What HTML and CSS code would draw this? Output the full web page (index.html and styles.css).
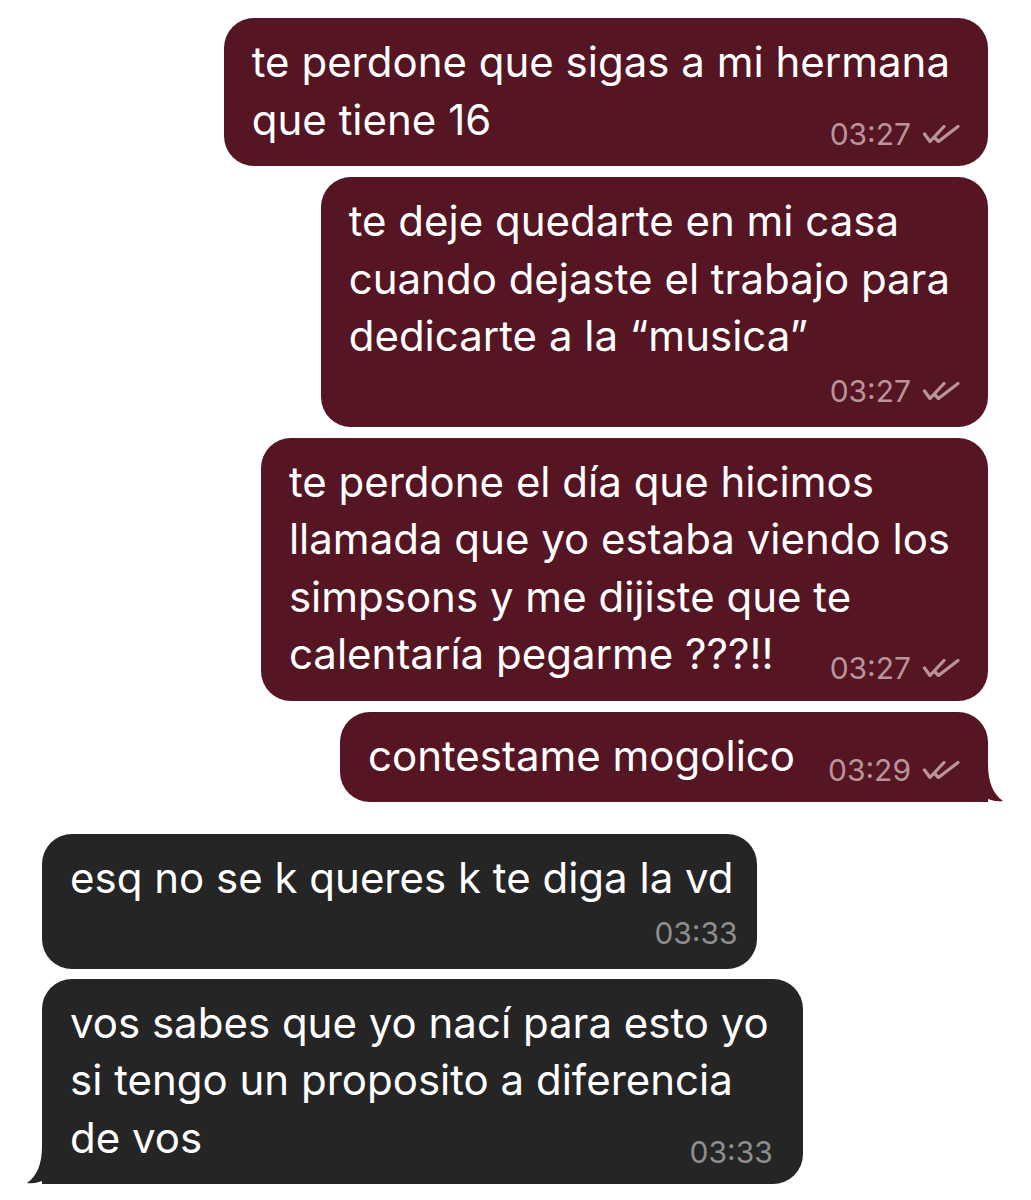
FILE: index.html
```html
<!DOCTYPE html>
<html lang="es">

<head>
    <meta charset="utf-8">
    <meta name="viewport" content="width=device-width, initial-scale=1.0">
    <title>Chat</title>
    <link rel="stylesheet" href="styles.css">
</head>

<body>
    <main class="chat">

        <!-- mensajes enviados -->
        <div class="msg msg--out">
            <p class="text">te perdone que sigas a mi hermana<br>que tiene 16<span class="meta">03:27 <svg class="checks" viewBox="0 0 40 18"><path d="M2.5 9 L8 16.5 L22 1.5 M13 13 L16.5 16.5 L36 1.5" /></svg></span></p>
        </div>

        <div class="msg msg--out">
            <p class="text">te deje quedarte en mi casa<br>cuando dejaste el trabajo para<br>dedicarte a la “musica”</p>
            <div class="meta meta--row">03:27 <svg class="checks" viewBox="0 0 40 18"><path d="M2.5 9 L8 16.5 L22 1.5 M13 13 L16.5 16.5 L36 1.5" /></svg></div>
        </div>

        <div class="msg msg--out">
            <p class="text">te perdone el día que hicimos<br>llamada que yo estaba viendo los<br>simpsons y me dijiste que te<br>calentaría pegarme ???!!<span class="meta">03:27 <svg class="checks" viewBox="0 0 40 18"><path d="M2.5 9 L8 16.5 L22 1.5 M13 13 L16.5 16.5 L36 1.5" /></svg></span></p>
        </div>

        <div class="msg msg--out msg--last">
            <p class="text">contestame mogolico<span class="meta">03:29 <svg class="checks" viewBox="0 0 40 18"><path d="M2.5 9 L8 16.5 L22 1.5 M13 13 L16.5 16.5 L36 1.5" /></svg></span></p>
            <svg class="tail tail--right" viewBox="0 0 32 46"><path d="M0 0 H17 V8 C17 26 22 38 32 45 C25 46 18 44 13 41 C9 44 5 46 0 46 Z" /></svg>
        </div>

        <!-- mensajes recibidos -->
        <div class="msg msg--in">
            <p class="text">esq no se k queres k te diga la vd</p>
            <div class="meta meta--row">03:33</div>
        </div>

        <div class="msg msg--in msg--last">
            <p class="text">vos sabes que yo nací para esto yo<br>si tengo un proposito a diferencia<br>de vos<span class="meta">03:33</span></p>
            <svg class="tail tail--left" viewBox="0 0 32 46"><path d="M0 0 H17 V8 C17 26 22 38 32 45 C25 46 18 44 13 41 C9 44 5 46 0 46 Z" /></svg>
        </div>

    </main>
</body></html>
```

FILE: styles.css
```css
/****GENERAL****/

body {
    background-color: #ffffff;
    margin: 0;
    font-family: Inter, 'Liberation Sans', sans-serif;
}

.chat {
    display: flex;
    flex-direction: column;
    padding: 18px 43px 16px 42px;
}

/****BURBUJAS****/

.msg {
    position: relative;
    padding: 15px 38px 18px 28px;
    border-radius: 30px;
    color: #ffffff;
}

.msg--out {
    align-self: flex-end;
    background-color: #551523;
    margin-bottom: 11px;
}

.msg--out.msg--last {
    border-bottom-right-radius: 0;
    margin-bottom: 32px;
}

.msg--in {
    align-self: flex-start;
    background-color: #252525;
    margin-bottom: 10px;
    padding-right: 23px;
}

.msg--in.msg--last {
    border-bottom-left-radius: 0;
    padding-right: 34px;
}

.text {
    margin: 0;
    font-size: 42px;
    line-height: 57.5px;
    white-space: nowrap;
}

/****HORA + CHECKS****/

.meta {
    float: right;
    position: relative;
    top: 25px;
    display: flex;
    align-items: center;
    gap: 11px;
    margin-left: 33px;
    margin-right: -12px;
    font-size: 30px;
    line-height: 36px;
    color: #b9949b;
}

.meta--row {
    float: none;
    top: 0;
    justify-content: flex-end;
    margin-top: 8px;
}

.msg--in .meta {
    color: #8e8e8e;
    margin-right: -4px;
}

.checks {
    flex-shrink: 0;
    width: 40px;
    height: 18px;
    fill: none;
    stroke: #b9949b;
    stroke-width: 3.2;
    stroke-linecap: round;
    stroke-linejoin: round;
}

/****COLITA****/

.tail {
    position: absolute;
    bottom: 0;
    width: 32px;
    height: 46px;
}

.tail--right {
    right: -15px;
    fill: #551523;
}

.tail--left {
    left: -15px;
    fill: #252525;
    transform: scaleX(-1);
}
```
